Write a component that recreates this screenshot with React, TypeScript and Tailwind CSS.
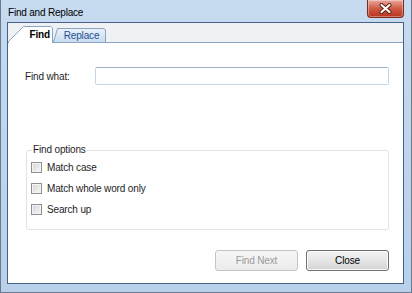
const font = { fontFamily: '"Liberation Sans", Arial, sans-serif' };

const CheckRow = ({ label }: { label: string }) => (
  <div className="flex h-[21px] items-center gap-[5px] pl-[4px]">
    <div className="h-[11px] w-[11px] border border-[#8f8f8f] bg-linear-to-br from-[#d6d6d6] to-[#f7f7f7] shadow-[inset_0_0_0_1px_#f4f4f4]"></div>
    <span className="text-[10px] tracking-[-0.15px] text-[#1e1e1e]">{label}</span>
  </div>
);

const FindTab = () => (
  <div className="relative z-10 -mb-px flex h-[17px] w-[45px] items-center justify-end pr-[3px]">
    <svg className="absolute inset-0" width="45" height="17" viewBox="0 0 45 17">
      <path d="M0.5 17 L0.5 15.5 L15.5 0.5 L42 0.5 Q44.5 0.5 44.5 3 L44.5 17 Z" fill="#ffffff" stroke="#8ba3c4" />
      <path d="M1 17 L1 16 L16 1 L42 1 Q44 1 44 3 L44 17 Z" fill="#ffffff" stroke="none" />
    </svg>
    <span className="relative text-[10px] font-bold tracking-[-0.15px] text-black">Find</span>
  </div>
);

const ReplaceTab = () => (
  <div className="relative flex h-[14px] w-[53px] items-center justify-center pl-[4px]">
    <svg className="absolute inset-0" width="53" height="14" viewBox="0 0 53 14">
      <defs>
        <linearGradient id="rep" x1="0" y1="0" x2="0" y2="1">
          <stop offset="0" stopColor="#eaf2fb" />
          <stop offset="1" stopColor="#c9dcf1" />
        </linearGradient>
      </defs>
      <path d="M0.5 14 L4.5 0.5 L50 0.5 Q52.5 0.5 52.5 3 L52.5 14" fill="url(#rep)" stroke="#8ba3c4" />
    </svg>
    <span className="relative text-[10px] tracking-[-0.15px] text-[#1d4f91]">Replace</span>
  </div>
);

const TitleClose = () => (
  <div className="flex h-[18px] w-[37px] items-center justify-center rounded-b-[4px] border border-t-0 border-[#7a2a22] bg-linear-to-b from-[#e9a89c] via-[#d05a45] to-[#b8331e] shadow-[inset_0_0_0_1px_rgba(255,255,255,0.35)]">
    <svg width="13" height="11" viewBox="0 0 13 11">
      <path d="M2.5 2 L10.5 9 M10.5 2 L2.5 9" stroke="#5a1a12" strokeWidth="4" strokeLinecap="round" />
      <path d="M2.5 2 L10.5 9 M10.5 2 L2.5 9" stroke="#ffffff" strokeWidth="2.2" strokeLinecap="round" />
    </svg>
  </div>
);

const App = () => {
  return (
    <div
      style={font}
      className="flex h-[293px] w-[412px] flex-col border-x border-b border-[#6b7a8e] bg-linear-to-b from-[#c6daf0] to-[#b9d0ea]"
    >
      <div className="flex h-[22px] shrink-0 items-start justify-between">
        <span className="ml-[7px] mt-[5px] text-[10px] tracking-[-0.2px] text-black">Find and Replace</span>
        <div className="mr-[7px]">
          <TitleClose />
        </div>
      </div>

      <div className="ml-[6px] flex h-[262px] w-[397px] flex-col border border-[#44618a] bg-white">
        {/* tab strip */}
        <div className="flex h-[19px] shrink-0 items-end bg-[#eff1f3]">
          <FindTab />
          <ReplaceTab />
        </div>

        {/* tab page */}
        <div className="flex flex-1 flex-col border-t border-[#8ba3c4] pl-[17px] pr-[14px]">
          <div className="mt-[24px] flex h-[18px] items-center">
            <span className="w-[70px] text-[10px] tracking-[-0.15px] text-[#1e1e1e]">Find what:</span>
            <div className="h-[18px] flex-1 rounded-[2px] border border-[#c3d7ec] border-t-[#9db3cd] bg-white"></div>
          </div>

          <fieldset className="ml-[1px] mt-[59px] rounded-[3px] border border-[#dde3e9] pb-[9px] pt-[1px]">
            <legend className="ml-[5px] px-[1px] text-[10px] leading-[12px] tracking-[-0.15px] text-[#1e1e1e]">
              Find options
            </legend>
            <CheckRow label="Match case" />
            <CheckRow label="Match whole word only" />
            <CheckRow label="Search up" />
          </fieldset>

          <div className="mt-[20px] flex justify-end gap-[8px]">
            <button className="h-[21px] w-[83px] rounded-[3px] border border-[#c4c4c4] bg-linear-to-b from-[#f6f6f6] to-[#ececec] text-[10px] tracking-[-0.15px] text-[#9a9a9a]">
              Find Next
            </button>
            <button className="h-[21px] w-[83px] rounded-[3px] border border-[#707070] bg-linear-to-b from-[#f3f3f3] via-[#e6e6e6] to-[#d3d3d3] text-[10px] tracking-[-0.15px] text-black shadow-[inset_0_0_0_1px_#fbfbfb]">
              Close
            </button>
          </div>
        </div>
      </div>
    </div>
  );
};

export default App;
